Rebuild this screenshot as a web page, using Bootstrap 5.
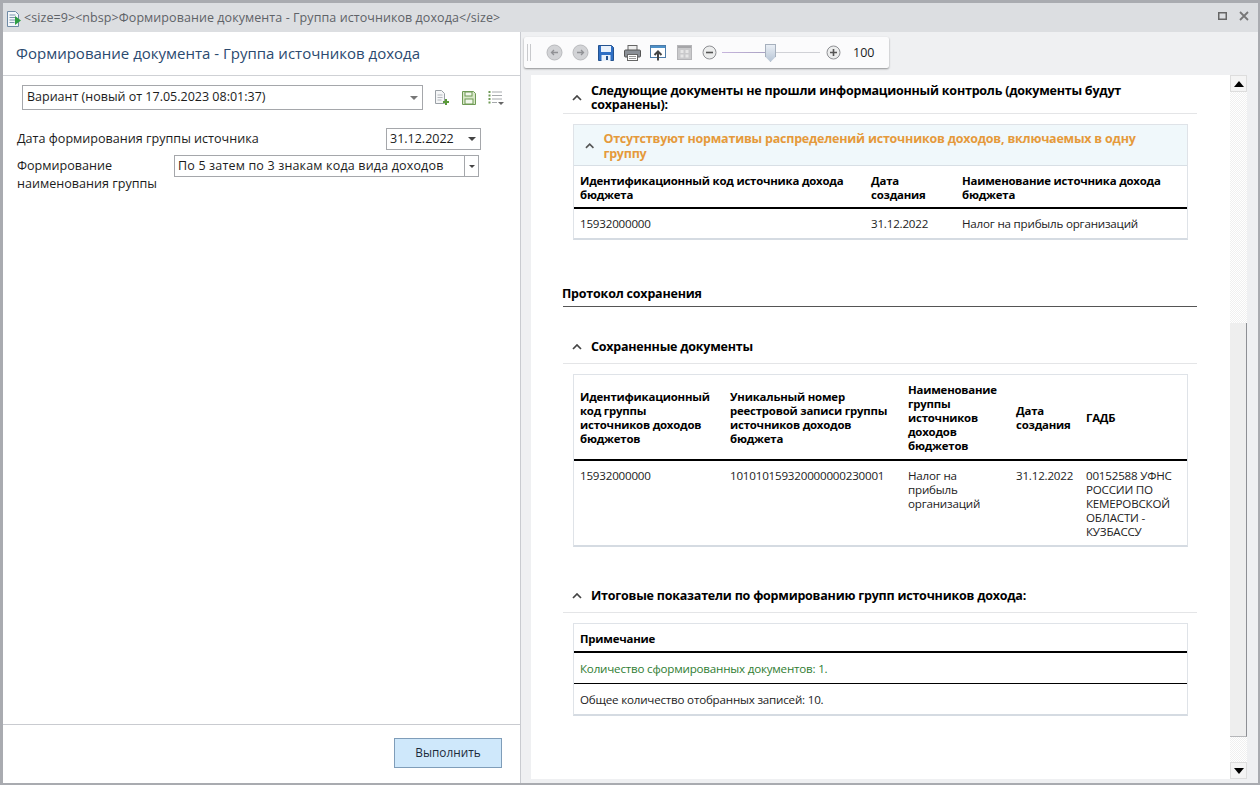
<!DOCTYPE html>
<html lang="ru"><head><meta charset="utf-8"><title>Формирование документа</title>
<link href="https://cdn.jsdelivr.net/npm/bootstrap@5.3.0/dist/css/bootstrap.min.css" rel="stylesheet">
<style>
html,body{height:100%;overflow:hidden}
body{width:1260px;height:785px;background:#fff;font-family:"Open Sans","Noto Sans",sans-serif;font-size:12.5px;color:#1c1c1c}
.win{width:1260px;height:785px;border:solid #a9abb0;border-width:3px 2px 2px 3px;background:#fff;overflow:hidden}
.ttl{height:29px;background:#dcdee1;color:#5f6368;font-size:12.5px;padding:2px 0 0 3px;flex:none}
.ttl .tx{margin-left:2px;letter-spacing:.07px}
.wbtn{margin-right:9px;gap:12px;margin-bottom:5px}
.bodyrow{height:751px}
.lp{width:518px;flex:none;border-right:1px solid #c9cbd0}
.lp-h{height:44px;padding-left:13px;border-bottom:1px solid #cfd1d5;font-size:15px;color:#2b4a6f;flex:none}
.lp-b{flex:1;padding:9px 15px 0 13px}
.fld{height:25px;border:1px solid #a5a7ab;background:#fff;padding-left:4px;font-size:12.5px}
.caret-d{width:0;height:0;border:4px solid transparent;border-top:4px solid #444;border-bottom:0}
.caret-l{border-top-color:#777}
.varf{width:401px;flex:none;margin-left:6px}
.tool-ic{gap:11px;margin-left:11px}
.lab{line-height:18px;font-size:12.6px;padding-left:1px}
.lab2{padding-top:2px}
.lp-f{height:59px;border-top:1px solid #c9cbd0;padding:13px 18px 0 0;flex:none}
.runb{width:108px;height:30px;background:#cfe8fb;border:1px solid #7f9db9;font-size:11.8px;color:#1c2a3a;padding:0;border-radius:0}
.rp{flex:1;background:#eff0f2;min-width:0}
.tb-wrap{height:43px;padding:5px 0 0 3px;flex:none}
.tb{width:365px;height:31px;background:#fbfbfc;border-radius:2px;box-shadow:0 1px 2px rgba(0,0,0,.4);padding-left:3px}
.grip{width:6px;height:17px;margin-right:13px;background:repeating-linear-gradient(90deg,#c8c9cc 0 1px,transparent 1px 3px)}
.tbi{gap:9px}
.ml1{margin-left:1px}
.ml2{margin-left:2px}
.slider{width:98px;height:1px;background:linear-gradient(90deg,#c7b5dd 0,#a9a2c2 45%,#d0d1d6 50%);margin:0 6px 0 5px}
.knob{width:11px;height:18px;margin-left:43px;margin-top:-8px;background:linear-gradient(#e9eef5,#b9c6d6);border:1px solid #a6b0bd;clip-path:polygon(0 0,100% 0,100% 70%,50% 100%,0 70%)}
.zoomv{margin-left:12px;font-size:12.5px;padding-top:2px}
.rr{flex:1;min-height:0;padding-left:10px;margin-bottom:4px}
.doc{width:699px;flex:none;background:#fff;padding:7px 33px 0 32px;overflow:hidden;line-height:14px;font-size:11.6px}
.sb{width:17px;flex:none;background:#f3f3f3;margin-right:10px}
.sb-track{flex:none;height:231px;background:repeating-conic-gradient(#f0f0f0 0 25%,#fff 0 50%) 0 0/2px 2px}
.sb-track2{flex:1;height:auto}
.sb-btn{height:17px;flex:none;background:#f4f4f4;border:1px solid #ddd}
.sb-thumb{height:414px;flex:none;background:#eeeeee;border-bottom:1px solid #b5b6b9;border-right:1px solid #8d8f94}
.up{width:0;height:0;border:5px solid transparent;border-bottom:6px solid #000;border-top:0}
.dn{width:0;height:0;border:5px solid transparent;border-top:6px solid #000;border-bottom:0}
.sec-h{border-bottom:1px solid #e4e5e7;font-weight:700;font-size:12.5px;letter-spacing:-.22px;color:#000;padding-left:9px;gap:9px}
.sec-h svg{flex:none}
.s1{height:32px}
.s2b{height:26px;padding-bottom:7px;margin-top:31px}
.s3{height:26px;padding-bottom:7px;margin-top:40px}
.bx{margin:10px 0 0 10px;width:615px;border:1px solid #dfe3e8;border-bottom:2px solid #d5dbe2}
.bx-h{height:41px;background:#f0f8fb;border-bottom:1px solid #d8dfe5;color:#e59a3b;font-weight:700;font-size:12.5px;letter-spacing:-.22px;line-height:15px;padding:2px 40px 0 11px;gap:9px}
.tt{width:100%;table-layout:fixed;border-collapse:collapse;margin:0}
.tt th{font-size:11.4px;letter-spacing:-.2px;font-weight:700;color:#000;padding:2px 6px 0;vertical-align:middle;border-bottom:2px solid #000;text-align:left}
.tt td{padding:8px 6px 0;vertical-align:top;color:#222;letter-spacing:-.2px}
.tt .tdn{padding-top:9px}
.c291{width:291px}.c91{width:91px}.c150{width:150px}.c178{width:178px}.c108{width:108px}.c70{width:70px}
.proto{font-weight:700;font-size:12.5px;letter-spacing:-.2px;color:#000;border-bottom:1px solid #555;height:20px;margin-top:47px;line-height:14px;text-indent:-1px}
.green{color:#2f7d32!important}
.line-b td{border-bottom:1px solid #000}
.dt1{width:95px;height:22px;margin-right:24px;padding-left:3px}
.r1{margin-top:18px;height:22px}
.r2{margin-top:5px;margin-right:26px}
.nm1{width:305px;height:22px;padding-left:3px;letter-spacing:.17px}
.arrw{width:14px;height:20px;border-left:1px solid #a5a7ab}
.small-c{border-width:3px}
.h42{height:42px}.h29{height:30px}.h84{height:85px}.h85{height:85px}.h28{height:28px}.h30{height:31px}
</style></head><body>
<div class="win d-flex flex-column">
 <div class="ttl d-flex align-items-center">
  <svg width="16" height="18" viewBox="0 0 16 18"><path d="M1.500 1.500h8l3 3v12h-11z" fill="#f4f7fa" stroke="#6f8aa5"/><path d="M3.500 5h6M3.500 7.500h7M3.500 10h7M3.500 12.500h5" stroke="#7d95ad"/><path d="M9 6l6 4.500-6 4.500z" fill="#2f9e44"/></svg>
  <span class="tx flex-grow-1">&lt;size=9&gt;&lt;nbsp&gt;Формирование документа - Группа источников дохода&lt;/size&gt;</span>
  <div class="wbtn d-flex align-items-center">
   <svg width="9" height="9" viewBox="0 0 9 9"><rect x=".75" y=".75" width="7.500" height="6.500" fill="none" stroke="#666" stroke-width="1.500"/></svg>
   <svg width="10" height="10" viewBox="0 0 10 10"><path d="M1 1l8 8M9 1l-8 8" stroke="#777" stroke-width="1.800"/></svg>
  </div>
 </div>
 <div class="bodyrow d-flex">
  <div class="lp d-flex flex-column">
   <div class="lp-h d-flex align-items-center">Формирование документа - Группа источников дохода</div>
   <div class="lp-b">
    <div class="d-flex align-items-center">
     <div class="fld varf d-flex align-items-center justify-content-between"><span>Вариант (новый от 17.05.2023 08:01:37)</span><span class="caret-d caret-l me-1"></span></div>
     <div class="tool-ic d-flex align-items-center">
      <svg width="16" height="18" viewBox="0 0 16 18"><path d="M1.500 1.500h6l3 3v10h-9z" fill="#f5f6f7" stroke="#9aa0a6"/><path d="M3.500 6h5M3.500 8.500h5M3.500 11h4" stroke="#b5b9be"/><path d="M9 13h6M12 10v6" stroke="#5a9a3a" stroke-width="2"/></svg>
      <svg width="16" height="16" viewBox="0 0 16 16"><path d="M1.500 1.500h11l2 2v11h-13z" fill="#d9e8c9" stroke="#6f9a55"/><rect x="4" y="2" width="7" height="4" fill="#f2f7ec" stroke="#6f9a55"/><rect x="4" y="9" width="8" height="5" fill="#f2f7ec" stroke="#6f9a55"/></svg>
      <svg width="16" height="16" viewBox="0 0 16 16"><path d="M.5 2h2M.5 5.500h2M.5 9h2M.5 12.500h2" stroke="#6f9a55" stroke-width="2"/><path d="M4 2h10M4 5.500h10M4 9h10M4 12.500h5" stroke="#a6a9ad"/><path d="M10 12h6l-3 3z" fill="#666"/></svg>
     </div>
    </div>
    <div class="d-flex align-items-center justify-content-between r1">
     <span class="lab">Дата формирования группы источника</span>
     <div class="fld d-flex align-items-center justify-content-between dt1"><span>31.12.2022</span><span class="caret-d me-1"></span></div>
    </div>
    <div class="d-flex justify-content-between r2">
     <span class="lab lab2">Формирование<br>наименования группы</span>
     <div class="fld d-flex align-items-center justify-content-between nm1"><span>По 5 затем по 3 знакам кода вида доходов</span><span class="arrw d-flex align-items-center justify-content-center"><span class="caret-d small-c"></span></span></div>
    </div>
   </div>
   <div class="lp-f d-flex justify-content-end"><button type="button" class="btn runb">Выполнить</button></div>
  </div>
  <div class="rp d-flex flex-column">
   <div class="tb-wrap"><div class="tb d-flex align-items-center">
    <span class="grip"></span>
    <div class="d-flex align-items-center tbi">
     <svg width="17" height="17" viewBox="0 0 17 17"><circle cx="8.500" cy="8.500" r="7.500" fill="#d2d3d6" stroke="#b9babd"/><path d="M12 8.500H6M8 6l-2.500 2.500L8 11" stroke="#909195" fill="none" stroke-width="1.300"/></svg>
     <svg width="17" height="17" viewBox="0 0 17 17"><circle cx="8.500" cy="8.500" r="7.500" fill="#d2d3d6" stroke="#b9babd"/><path d="M5 8.500h6M9 6l2.500 2.500L9 11" stroke="#909195" fill="none" stroke-width="1.300"/></svg>
     <svg width="16" height="16" viewBox="0 0 16 16"><path d="M.5.500h13l2 2v13H.5z" fill="#2f6fc4" stroke="#24528f"/><rect x="3" y="1" width="10" height="6" fill="#e9f1fb"/><rect x="3.500" y="10" width="9" height="6" fill="#e9f1fb"/><rect x="8" y="11" width="2" height="4" fill="#24528f"/></svg>
     <svg class="ml1" width="17" height="16" viewBox="0 0 17 16"><rect x="4" y=".5" width="9" height="5" fill="#eee" stroke="#666"/><rect x=".5" y="5" width="16" height="7" rx="1" fill="#8b9097" stroke="#555"/><rect x="3.500" y="9.500" width="10" height="6" fill="#fff" stroke="#666"/><path d="M5 11.500h7M5 13.500h7" stroke="#999"/></svg>
     <svg width="16" height="16" viewBox="0 0 16 16"><rect x=".5" y=".5" width="15" height="12" fill="#fff" stroke="#4d7ba8"/><rect x="1" y="1" width="14" height="2" fill="#4d90c8"/><path d="M8 15.500V7M4.500 10L8 6.500l3.500 3.500" fill="none" stroke="#444" stroke-width="2"/></svg>
     <svg class="ml2" width="15" height="15" viewBox="0 0 15 15"><rect x=".5" y=".5" width="14" height="14" fill="#c9c9cb" stroke="#b5b5b8"/><rect x="1" y="1" width="13" height="2" fill="#a5a5a8"/><rect x="3.500" y="5" width="3" height="3" fill="#e6e6e6"/><rect x="8.500" y="5" width="3" height="3" fill="#e6e6e6"/><rect x="3.500" y="9.500" width="3" height="3" fill="#e6e6e6"/><rect x="8.500" y="9.500" width="3" height="3" fill="#e6e6e6"/></svg>
     <svg class="ml1" width="15" height="15" viewBox="0 0 15 15"><circle cx="7.500" cy="7.500" r="6.500" fill="#eceded" stroke="#8f9094"/><path d="M4 7.500h7" stroke="#555" stroke-width="1.600"/></svg>
    </div>
    <div class="slider"><div class="knob"></div></div>
    <svg width="15" height="15" viewBox="0 0 15 15"><circle cx="7.500" cy="7.500" r="6.500" fill="#eceded" stroke="#8f9094"/><path d="M4 7.500h7M7.500 4v7" stroke="#555" stroke-width="1.600"/></svg>
    <span class="zoomv">100</span>
   </div></div>
   <div class="rr d-flex">
    <div class="doc">
     <div class="sec-h d-flex align-items-center s1"><svg width="10" height="6" viewBox="0 0 10 6"><path d="M1 5l4-4 4 4" fill="none" stroke="#444" stroke-width="1.700"/></svg><span>Следующие документы не прошли информационный контроль (документы будут сохранены):</span></div>
     <div class="bx">
      <div class="bx-h d-flex align-items-center"><svg width="10" height="6" viewBox="0 0 10 6"><path d="M1 5l4-4 4 4" fill="none" stroke="#555" stroke-width="1.700"/></svg><span>Отсутствуют нормативы распределений источников доходов, включаемых в одну группу</span></div>
      <table class="tt"><colgroup><col class="c291"><col class="c91"><col></colgroup>
       <tr class="h42"><th>Идентификационный код источника дохода бюджета</th><th>Дата создания</th><th>Наименование источника дохода бюджета</th></tr>
       <tr class="h29"><td>15932000000</td><td>31.12.2022</td><td>Налог на прибыль организаций</td></tr>
      </table>
     </div>
     <div class="proto">Протокол сохранения</div>
     <div class="sec-h d-flex align-items-center s2b"><svg width="10" height="6" viewBox="0 0 10 6"><path d="M1 5l4-4 4 4" fill="none" stroke="#444" stroke-width="1.700"/></svg><span>Сохраненные документы</span></div>
     <div class="bx">
      <table class="tt"><colgroup><col class="c150"><col class="c178"><col class="c108"><col class="c70"><col></colgroup>
       <tr class="h84"><th>Идентификационный код группы источников доходов бюджетов</th><th>Уникальный номер реестровой записи группы источников доходов бюджета</th><th>Наименование группы источников доходов бюджетов</th><th>Дата создания</th><th>ГАДБ</th></tr>
       <tr class="h85"><td>15932000000</td><td>101010159320000000230001</td><td>Налог на прибыль организаций</td><td>31.12.2022</td><td>00152588 УФНС РОССИИ ПО КЕМЕРОВСКОЙ ОБЛАСТИ - КУЗБАССУ</td></tr>
      </table>
     </div>
     <div class="sec-h d-flex align-items-center s3"><svg width="10" height="6" viewBox="0 0 10 6"><path d="M1 5l4-4 4 4" fill="none" stroke="#444" stroke-width="1.700"/></svg><span>Итоговые показатели по формированию групп источников дохода:</span></div>
     <div class="bx">
      <table class="tt">
       <tr class="h28"><th>Примечание</th></tr>
       <tr class="h30 line-b"><td class="green tdn">Количество сформированных документов: 1.</td></tr>
       <tr class="h30"><td class="tdn">Общее количество отобранных записей: 10.</td></tr>
      </table>
     </div>
    </div>
    <div class="sb d-flex flex-column">
     <div class="sb-btn d-flex align-items-center justify-content-center"><span class="up"></span></div>
     <div class="sb-track"></div>
     <div class="sb-thumb"></div>
     <div class="sb-track sb-track2"></div>
     <div class="sb-btn d-flex align-items-center justify-content-center"><span class="dn"></span></div>
    </div>
   </div>
  </div>
 </div>
</div>
</body></html>
